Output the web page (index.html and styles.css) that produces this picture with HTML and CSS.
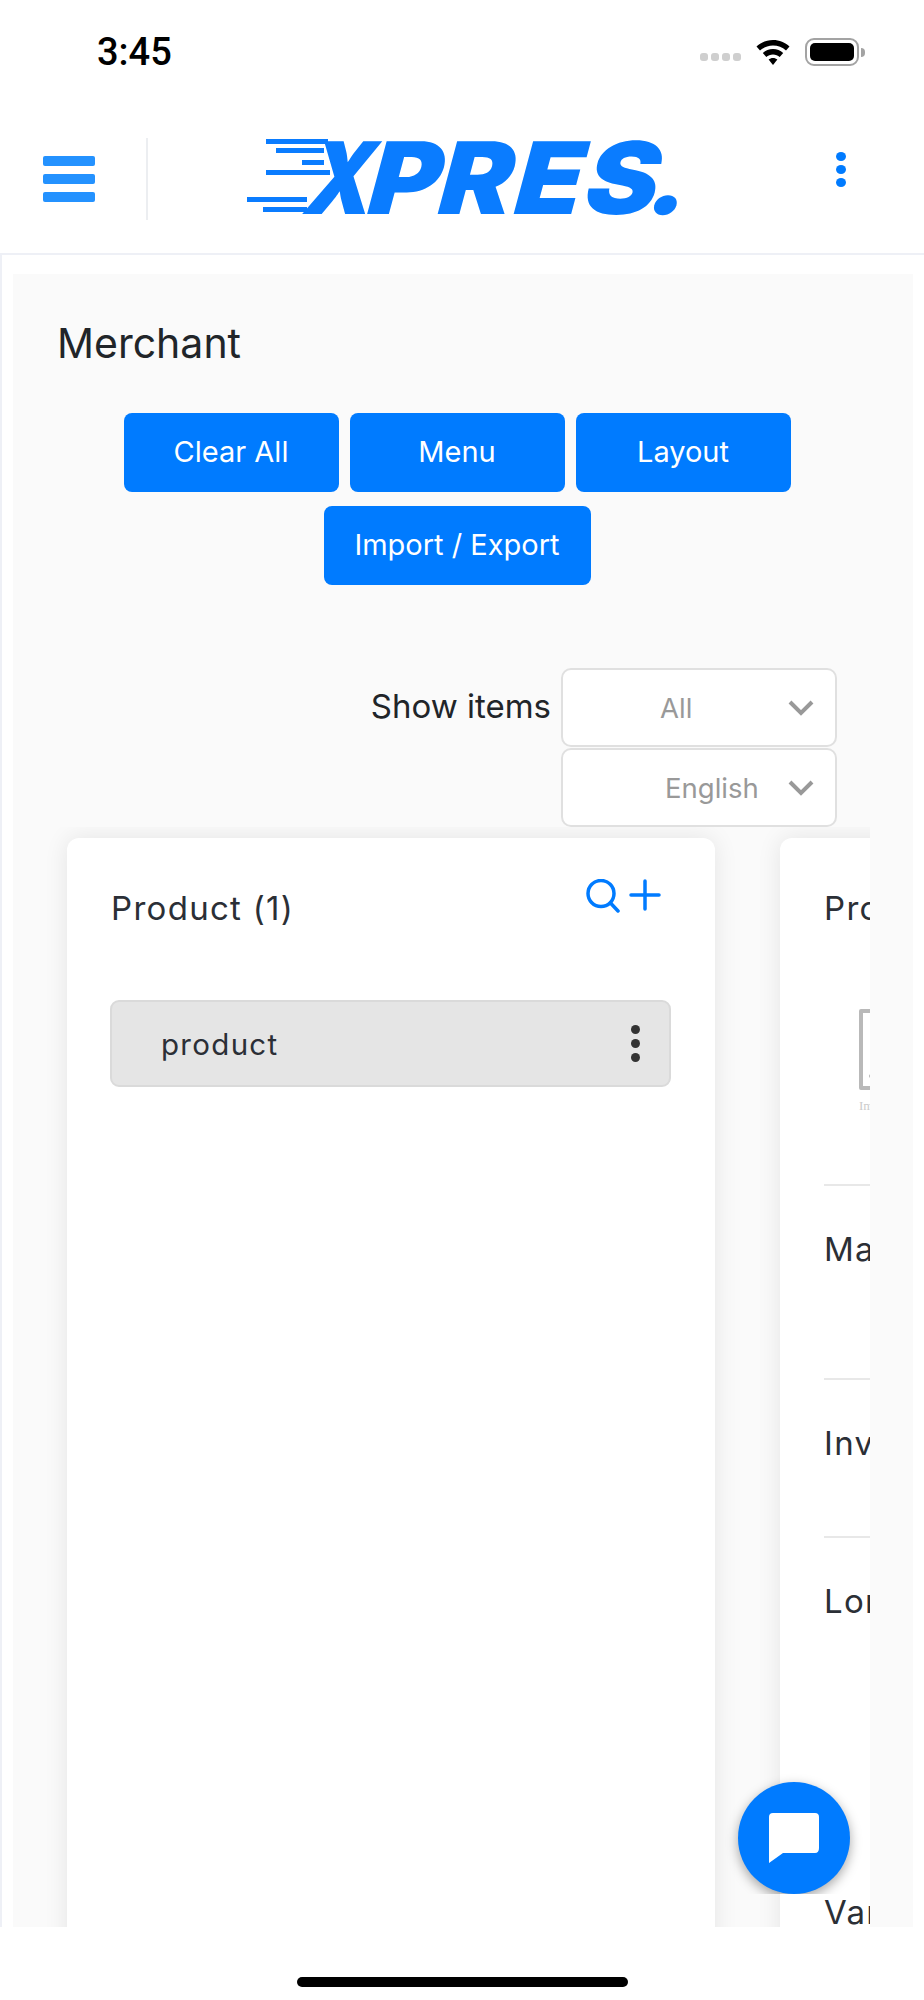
FILE: index.html
```html
<!DOCTYPE html>
<html>
<head>
    <title>Merchant</title>
    <link rel="stylesheet" href="styles.css">
</head>
<body>
    <div class="phone">
        <div class="status-bar">
            <span class="clock">3:45</span>
            <div class="status-icons">
                <div class="signal"><i></i><i></i><i></i><i></i></div>
                <svg class="wifi" width="36" height="28" viewBox="0 0 36 28">
                    <path d="M18 2C11.500 2 6 4.400 1.500 8.500L5 12.500C8.600 9.300 13 7.500 18 7.500S27.400 9.300 31 12.500L34.500 8.500C30 4.400 24.500 2 18 2Z" fill="#000"/>
                    <path d="M18 11C14 11 10.600 12.400 7.800 15L11.300 19C13.100 17.400 15.400 16.400 18 16.400S22.900 17.400 24.700 19L28.200 15C25.400 12.400 22 11 18 11Z" fill="#000"/>
                    <path d="M18 20C16.300 20 14.800 20.600 13.600 21.600L18 27L22.400 21.600C21.200 20.600 19.700 20 18 20Z" fill="#000"/>
                </svg>
                <div class="battery"><div class="battery-fill"></div></div>
                <div class="battery-nub"></div>
            </div>
        </div>

        <header class="topbar">
            <button class="hamburger"><i></i><i></i><i></i></button>
            <div class="topbar-divider"></div>
            <svg class="logo" width="450" height="84" viewBox="0 0 450 84">
                <!-- speed lines run into the X -->
                <rect x="26" y="2" width="62" height="5" fill="#0a7cff"/>
                <rect x="36" y="11" width="48" height="5" fill="#0a7cff"/>
                <rect x="62" y="23" width="22" height="5" fill="#0a7cff"/>
                <rect x="26" y="33" width="64" height="5" fill="#0a7cff"/>
                <rect x="7" y="60" width="60" height="5" fill="#0a7cff"/>
                <rect x="23" y="70" width="44" height="5" fill="#0a7cff"/>
                <text class="logo-text" transform="translate(0 77) skewX(-15) scale(0.85 1)" x="71" y="0">X</text>
                <text class="logo-text" transform="translate(0 77) skewX(-15) scale(1.1 1)" x="111 175 244 308 366" y="0">PRES.</text>
            </svg>
            <div class="topbar-kebab"><i></i><i></i><i></i></div>
        </header>

        <div class="page">
            <main class="panel">
                <h1 class="panel-title">Merchant</h1>

                <div class="actions">
                    <button class="btn">Clear All</button>
                    <button class="btn">Menu</button>
                    <button class="btn">Layout</button>
                    <button class="btn btn-wide">Import / Export</button>
                </div>

                <div class="filters">
                    <span class="filters-label">Show items</span>
                    <div class="filters-selects">
                        <div class="select select-all">
                            <span>All</span>
                            <svg width="28" height="18" viewBox="0 0 28 18"><path d="M3 3L14 14L25 3" fill="none" stroke="#999" stroke-width="4"/></svg>
                        </div>
                        <div class="select select-lang">
                            <span>English</span>
                            <svg width="28" height="18" viewBox="0 0 28 18"><path d="M3 3L14 14L25 3" fill="none" stroke="#999" stroke-width="4"/></svg>
                        </div>
                    </div>
                </div>

                <div class="board">
                    <section class="card">
                        <div class="card-head">
                            <h2 class="card-title">Product (1)</h2>
                            <div class="card-tools">
                                <svg width="34" height="34" viewBox="0 0 34 34"><circle cx="15" cy="14.500" r="13" fill="none" stroke="#007bff" stroke-width="3.500"/><path d="M24.500 24L32 32" stroke="#007bff" stroke-width="3.500" stroke-linecap="round"/></svg>
                                <svg width="32" height="32" viewBox="0 0 32 32"><path d="M16 2V30M2 16H30" stroke="#007bff" stroke-width="3.500" stroke-linecap="round"/></svg>
                            </div>
                        </div>
                        <div class="item">
                            <span>product</span>
                            <div class="item-kebab"><i></i><i></i><i></i></div>
                        </div>
                    </section>

                    <section class="card card-detail">
                        <h2 class="card-title">Product details</h2>
                        <div class="image-box">
                            <div class="image-frame"><i></i></div>
                            <div class="image-caption">Image</div>
                        </div>
                        <div class="detail detail-manufacturer">Manufacturer</div>
                        <div class="detail detail-inventory">Inventory</div>
                        <div class="detail detail-long">Long description</div>
                        <div class="detail">Variants</div>
                    </section>
                </div>
            </main>
        </div>

        <div class="home-bar"><div class="home-indicator"></div></div>

        <div class="chat-clip">
            <button class="chat-btn">
                <svg width="52" height="52" viewBox="0 0 52 52"><path d="M5 1H47Q51 1 51 5V36Q51 41 47 41H15L1 51V5Q1 1 5 1Z" fill="#fff"/></svg>
            </button>
        </div>
    </div>
</body>
</html>
```

FILE: styles.css
```css
* {
    box-sizing: border-box;
}

body {
    margin: 0;
    padding: 0;
    background-color: #fff;
    font-family: 'Inter', sans-serif;
}

.phone {
    position: relative;
    display: flex;
    flex-direction: column;
    width: 924px;
    height: 2000px;
    overflow: hidden;
}

/* status bar */
.status-bar {
    display: flex;
    justify-content: space-between;
    align-items: center;
    height: 104px;
    padding: 0 59px 0 97px;
}

.clock {
    font-family: 'Roboto', sans-serif;
    font-size: 38px;
    font-weight: 500;
    color: #000;
}

.status-icons {
    display: flex;
    align-items: center;
}

.signal {
    display: flex;
    gap: 3px;
    align-self: flex-end;
    margin: 0 14px 5px 0;
}

.signal i {
    width: 8px;
    height: 8px;
    border-radius: 3px;
    background-color: #cfcfcf;
}

.wifi {
    margin-right: 14px;
}

.battery {
    width: 54px;
    height: 28px;
    padding: 3px;
    border: 2px solid #a3a3a3;
    border-radius: 9px;
}

.battery-fill {
    height: 100%;
    border-radius: 5px;
    background-color: #000;
}

.battery-nub {
    width: 4px;
    height: 9px;
    margin-left: 2px;
    border-radius: 0 4px 4px 0;
    background-color: #a3a3a3;
}

/* top bar */
.topbar {
    display: flex;
    align-items: center;
    height: 151px;
    padding: 0 78px 0 43px;
    border-bottom: 2px solid #eef0f6;
}

.hamburger {
    display: flex;
    flex-direction: column;
    gap: 8px;
    width: 52px;
    padding: 0;
    border: 0;
    background: none;
}

.hamburger i {
    display: block;
    height: 10px;
    border-radius: 2px;
    background-color: #2492ff;
}

.topbar-divider {
    width: 2px;
    height: 82px;
    margin: 0 0 0 51px;
    background-color: #eceef1;
}

.logo {
    margin-left: 92px;
}

.logo-text {
    font-family: 'Inter', sans-serif;
    font-size: 100px;
    font-weight: 900;
    fill: #0a7cff;
}

.topbar-kebab {
    display: flex;
    flex-direction: column;
    gap: 4px;
    margin: -19px 0 0 auto;
}

.topbar-kebab i {
    width: 10px;
    height: 9px;
    border-radius: 50%;
    background-color: #007bff;
}

/* page */
.page {
    flex: 1;
    min-height: 0;
    padding: 19px 11px 0 11px;
    border-left: 2px solid #eef0f6;
}

.panel {
    display: flex;
    flex-direction: column;
    height: 100%;
    padding: 44px 56px 0 44px;
    background-color: #fafafa;
}

.panel-title {
    margin: 0 0 45px 0;
    font-size: 41px;
    font-weight: 400;
    line-height: 50px;
    color: #212529;
}

.actions {
    display: flex;
    flex-wrap: wrap;
    justify-content: center;
    gap: 14px 11px;
}

.btn {
    width: 215px;
    height: 79px;
    padding: 0 0 2px 0;
    border: 0;
    border-radius: 8px;
    background-color: #007bff;
    font-family: 'Inter', sans-serif;
    font-size: 29px;
    font-weight: 400;
    color: #fff;
}

.btn-wide {
    width: 267px;
}

.filters {
    display: flex;
    justify-content: flex-end;
    gap: 10px;
    margin: 83px 20px 0 0;
}

.filters-label {
    margin-top: 18px;
    font-size: 33px;
    line-height: 40px;
    color: #212529;
}

.filters-selects {
    display: flex;
    flex-direction: column;
    gap: 1px;
}

.select {
    display: flex;
    justify-content: space-between;
    align-items: center;
    width: 276px;
    height: 79px;
    padding-right: 20px;
    border: 2px solid #e0e0e0;
    border-radius: 10px;
    background-color: #fff;
    font-size: 27.500px;
    color: #999;
}

.select-all {
    padding-left: 97px;
}

.select-lang {
    padding-left: 102px;
}

.board {
    flex: 1;
    min-height: 0;
    display: flex;
    gap: 65px;
    margin: 0 -13px 0 -44px;
    padding: 11px 0 0 54px;
    overflow: hidden;
}

.card {
    flex-shrink: 0;
    width: 648px;
    height: 1400px;
    padding: 38px 44px;
    border-radius: 12px;
    background-color: #fff;
    box-shadow: 0 0 24px rgba(0, 0, 0, 0.09);
}

.card-head {
    display: flex;
    justify-content: space-between;
    align-items: flex-start;
    height: 124px;
}

.card-title {
    margin: 0;
    font-size: 33px;
    font-weight: 400;
    line-height: 64px;
    letter-spacing: 1.300px;
    color: #2b2f36;
    white-space: nowrap;
}

.card-tools {
    display: flex;
    gap: 9px;
    margin-top: 3px;
    margin-right: 10px;
}

.item {
    display: flex;
    justify-content: space-between;
    align-items: center;
    width: 561px;
    height: 87px;
    margin-left: -1px;
    padding: 0 29px 0 49px;
    border: 2px solid #dadada;
    border-radius: 9px;
    background-color: #e5e5e5;
    font-size: 29.500px;
    letter-spacing: 1.300px;
    color: #2b2f36;
}

.item-kebab {
    display: flex;
    flex-direction: column;
    gap: 5px;
}

.item-kebab i {
    width: 9px;
    height: 9px;
    border-radius: 50%;
    background-color: #333;
}

.card-detail {
    white-space: nowrap;
}

.image-box {
    margin: 69px 0 0 35px;
}

.image-frame {
    position: relative;
    width: 100px;
    height: 81px;
    border: 4px solid #b9b9b9;
    border-radius: 2px;
}

.image-frame i {
    position: absolute;
    left: 6px;
    bottom: 8px;
    width: 4px;
    height: 4px;
    border-radius: 50%;
    background-color: #b9b9b9;
}

.image-caption {
    margin-top: 8px;
    font-family: 'Liberation Serif', serif;
    font-size: 13px;
    color: #ccc;
}

.detail {
    height: 150px;
    padding-top: 39px;
    border-top: 2px solid #e8e8e8;
    font-size: 33px;
    line-height: 48px;
    letter-spacing: 1.300px;
    color: #2b2f36;
}

.detail-manufacturer {
    height: 194px;
    margin-top: 70px;
}

.detail-inventory {
    height: 158px;
}

.detail-long {
    height: 352px;
    padding-top: 39px;
}

.detail:last-child {
    border-top: 0;
    padding-top: 0;
}

/* bottom */
.home-bar {
    display: flex;
    justify-content: center;
    height: 73px;
    padding-top: 50px;
    background-color: #fff;
}

.home-indicator {
    width: 331px;
    height: 10px;
    border-radius: 5px;
    background-color: #000;
}

.chat-clip {
    position: absolute;
    left: 718px;
    top: 1762px;
    width: 152px;
    height: 132px;
    padding: 20px;
    overflow: hidden;
}

.chat-btn {
    display: flex;
    justify-content: center;
    align-items: center;
    width: 112px;
    height: 112px;
    padding: 0;
    border: 0;
    border-radius: 50%;
    background-color: #007bff;
    box-shadow: 0 4px 12px rgba(0, 0, 0, 0.35);
}
```
